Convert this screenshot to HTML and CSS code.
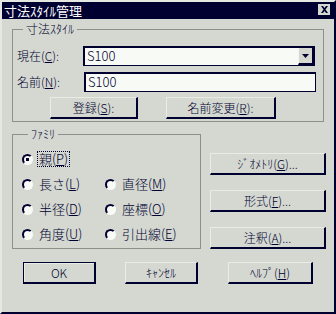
FILE: index.html
```html
<!DOCTYPE html>
<html lang="ja">
<head>
  <meta charset="UTF-8" />
  <title>寸法ｽﾀｲﾙ管理</title>
  <link rel="stylesheet" href="styles.css">
</head>
<body>
  <div class="window">
    <div class="titlebar">
      <span class="title">寸法ｽﾀｲﾙ管理</span>
      <span class="close">
        <svg width="9" height="7" viewBox="0 0 9 7"><path d="M1 0h2l1.5 2 1.5-2h2l-2.5 3.5 2.5 3.5h-2l-1.5-2-1.5 2h-2l2.5-3.5z" fill="#000030"/></svg>
      </span>
    </div>

    <div class="dialog-body">
      <fieldset class="group group-style">
        <legend>寸法ｽﾀｲﾙ</legend>
        <div class="field-row">
          <span class="field-label">現在(<u>C</u>):</span>
          <div class="combo">
            <span class="combo-value">S100</span>
            <span class="combo-btn">
              <svg width="7" height="4" viewBox="0 0 7 4"><path d="M0 0h7l-3.5 4z" fill="#000030"/></svg>
            </span>
          </div>
        </div>
        <div class="field-row">
          <span class="field-label">名前(<u>N</u>):</span>
          <div class="textbox">S100</div>
        </div>
        <div class="style-buttons">
          <button class="btn btn-register">登録(<u>S</u>):</button>
          <button class="btn btn-rename">名前変更(<u>R</u>):</button>
        </div>
      </fieldset>

      <div class="middle">
        <fieldset class="group group-family">
          <legend>ﾌｧﾐﾘ</legend>
          <div class="radio-grid">
            <div class="radio-item"><span class="radio checked"></span><span class="radio-text focused">親(<u>P</u>)</span></div>
            <div></div>
            <div class="radio-item"><span class="radio"></span><span class="radio-text">長さ(<u>L</u>)</span></div>
            <div class="radio-item"><span class="radio"></span><span class="radio-text">直径(<u>M</u>)</span></div>
            <div class="radio-item"><span class="radio"></span><span class="radio-text">半径(<u>D</u>)</span></div>
            <div class="radio-item"><span class="radio"></span><span class="radio-text">座標(<u>O</u>)</span></div>
            <div class="radio-item"><span class="radio"></span><span class="radio-text">角度(<u>U</u>)</span></div>
            <div class="radio-item"><span class="radio"></span><span class="radio-text">引出線(<u>E</u>)</span></div>
          </div>
        </fieldset>

        <div class="side-buttons">
          <button class="btn btn-side">ｼﾞｵﾒﾄﾘ(<u>G</u>)...</button>
          <button class="btn btn-side">形式(<u>F</u>)...</button>
          <button class="btn btn-side">注釈(<u>A</u>)...</button>
        </div>
      </div>

      <div class="footer">
        <button class="btn btn-ok">OK</button>
        <button class="btn btn-cancel">ｷｬﾝｾﾙ</button>
        <button class="btn btn-help">ﾍﾙﾌﾟ(<u>H</u>)</button>
      </div>
    </div>
  </div>
</body>
</html>
```

FILE: styles.css
```css
html, body {
  margin: 0;
  padding: 0;
}
body {
  font-family: "Noto Sans CJK JP", "Noto Sans", sans-serif;
  font-size: 12px;
  font-weight: 300;
  line-height: 14px;
  color: #000030;
  background: #d4d8d0;
}
u {
  text-decoration: underline;
  text-underline-offset: 1px;
}
.window {
  width: 336px;
  height: 314px;
  box-sizing: border-box;
  background: #d4d8d0;
  border-top: 2px solid #e4e8e0;
  border-left: 2px solid #e4e8e0;
  border-right: 2px solid #000030;
  border-bottom: 2px solid #000030;
}
.titlebar {
  height: 17px;
  background: #000030;
  color: #ffffff;
  display: flex;
  justify-content: space-between;
  align-items: flex-start;
}
.title {
  padding: 2px 0 0 2px;
  font-size: 13px;
  font-weight: 400;
}
.close {
  width: 13px;
  height: 12px;
  box-sizing: border-box;
  margin: 2px 3px 0 0;
  background: #d4d8d0;
  border-right: 1px solid #000030;
  border-bottom: 1px solid #000030;
  display: flex;
  align-items: center;
  justify-content: center;
}
.dialog-body {
  padding-left: 10px;
}
.group {
  margin: 0;
  border: 1px solid #8c908a;
  box-sizing: border-box;
}
.group legend {
  padding: 0 3px;
  margin-left: 6px;
  line-height: 14px;
}
.group-style {
  margin-top: 3px;
  width: 312px;
  padding: 10px 0 2px 4px;
}
.field-row {
  display: flex;
  align-items: center;
  height: 20px;
  margin-bottom: 6px;
}
.field-label {
  width: 66px;
}
.combo {
  width: 232px;
  height: 20px;
  box-sizing: border-box;
  display: flex;
  background: #f8faf6;
  border: 1px solid #000030;
  border-top-width: 2px;
  border-left-width: 2px;
}
.combo-value {
  flex: 1;
  padding-left: 2px;
  line-height: 16px;
  font-size: 13px;
}
.combo-btn {
  width: 16px;
  box-sizing: border-box;
  background: #d4d8d0;
  border-left: 1px solid #f4f6f2;
  border-right: 2px solid #000030;
  border-bottom: 2px solid #000030;
  display: flex;
  align-items: center;
  justify-content: center;
}
.textbox {
  width: 232px;
  height: 20px;
  margin-left: 1px;
  box-sizing: border-box;
  background: #f8faf6;
  border: 1px solid #000030;
  border-top-width: 2px;
  border-left-width: 2px;
  padding-left: 2px;
  line-height: 16px;
  font-size: 13px;
}
.style-buttons {
  display: flex;
  gap: 28px;
  margin: -1px 0 0 33px;
}
.btn {
  font-family: inherit;
  font-size: 12px;
  font-weight: 300;
  line-height: 14px;
  color: #000030;
  background: #d4d8d0;
  height: 22px;
  box-sizing: border-box;
  padding: 0;
  border-top: 1px solid #e8ece4;
  border-left: 1px solid #e8ece4;
  border-right: 2px solid #000030;
  border-bottom: 2px solid #000030;
  border-radius: 0;
}
.btn-register {
  width: 88px;
}
.btn-rename {
  width: 110px;
}
.middle {
  display: flex;
  gap: 9px;
  margin-top: 5px;
}
.group-family {
  width: 189px;
  padding: 8px 0 3px 9px;
}
.radio-grid {
  display: grid;
  grid-template-columns: 83px auto;
  grid-auto-rows: 20px;
  row-gap: 5px;
}
.radio-item {
  display: flex;
  align-items: center;
  gap: 5px;
}
.radio {
  width: 11px;
  height: 11px;
  box-sizing: border-box;
  border-radius: 50%;
  border: 2px solid;
  border-color: #000030 #f8faf6 #f8faf6 #000030;
  background: #f8faf6;
  position: relative;
}
.radio.checked::after {
  content: "";
  position: absolute;
  left: 2px;
  top: 2px;
  width: 3px;
  height: 3px;
  background: #000030;
}
.radio-text {
  padding: 0 1px;
  font-size: 13px;
}
.radio-text.focused {
  outline: 1px dotted #000030;
  outline-offset: 0;
}
.side-buttons {
  display: flex;
  flex-direction: column;
  gap: 15px;
  margin-top: 26px;
}
.btn-side {
  width: 116px;
}
.footer {
  display: flex;
  margin: 13px 0 0 11px;
}
.btn-ok {
  width: 73px;
  border: 2px solid #000030;
  border-top-width: 1px;
  border-left-width: 1px;
  box-shadow: inset 1px 1px #e8ece4;
}
.btn-cancel {
  width: 73px;
  margin-left: 29px;
}
.btn-help {
  width: 85px;
  margin-left: 30px;
}
```
